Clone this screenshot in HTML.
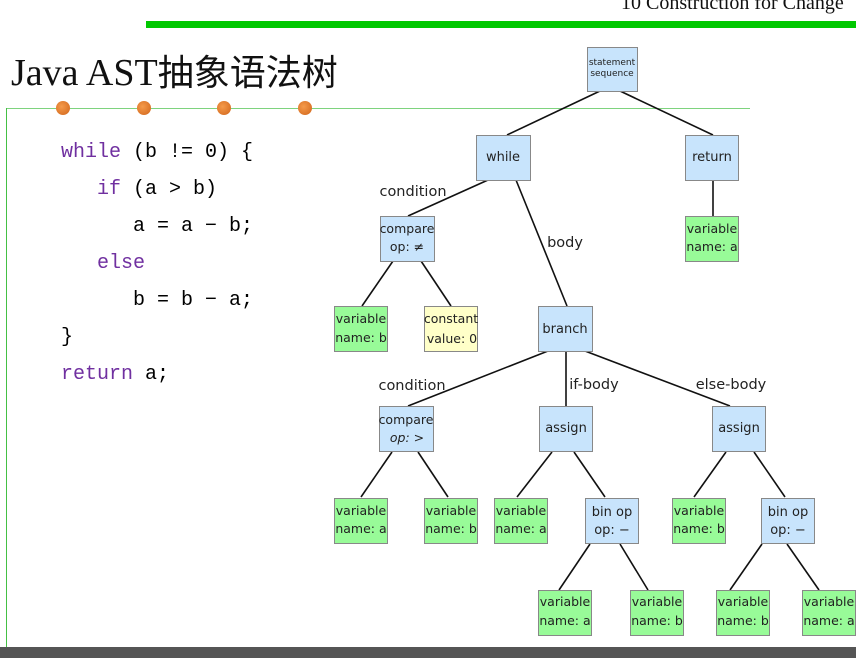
<!DOCTYPE html>
<html><head><meta charset="utf-8"><style>
html,body{margin:0;padding:0;background:#fff;width:856px;height:658px;overflow:hidden;position:relative}
.code{position:absolute;left:61px;top:134px;font-family:"Liberation Mono",monospace;font-size:20px;line-height:37px;color:#000;white-space:pre}
.k{color:#7030a0}
</style></head><body>
<div style="position:absolute;left:621px;top:-8px;font-family:'Liberation Serif',serif;font-size:20px;white-space:nowrap;color:#111">10 Construction for Change</div>
<div style="position:absolute;left:146px;top:21px;width:710px;height:7px;background:#00c800"></div>
<div style="position:absolute;left:11px;top:44px;font-family:'Liberation Serif','Noto Serif CJK SC',serif;font-size:38px;color:#111;white-space:nowrap">Java AST<span style="font-family:'Noto Sans CJK SC',sans-serif;font-size:36px">抽象语法树</span></div>
<div style="position:absolute;left:6px;top:108px;width:744px;height:1px;background:#7ed37e"></div>
<div style="position:absolute;left:6px;top:108px;width:1px;height:540px;background:#44c044"></div>
<div style="position:absolute;left:56px;top:101px;width:14px;height:14px;border-radius:50%;background:radial-gradient(circle at 40% 40%,#f59a4a,#d0651a)"></div>
<div style="position:absolute;left:137px;top:101px;width:14px;height:14px;border-radius:50%;background:radial-gradient(circle at 40% 40%,#f59a4a,#d0651a)"></div>
<div style="position:absolute;left:217px;top:101px;width:14px;height:14px;border-radius:50%;background:radial-gradient(circle at 40% 40%,#f59a4a,#d0651a)"></div>
<div style="position:absolute;left:298px;top:101px;width:14px;height:14px;border-radius:50%;background:radial-gradient(circle at 40% 40%,#f59a4a,#d0651a)"></div>
<div class="code"><span class="k">while</span> (b != 0) {
   <span class="k">if</span> (a &gt; b)
      a = a − b;
   <span class="k">else</span>
      b = b − a;
}
<span class="k">return</span> a;</div>
<div style="position:absolute;left:0;top:647px;width:856px;height:11px;background:#555"></div>
<svg width="856" height="658" style="position:absolute;left:0;top:0" font-family="DejaVu Sans,sans-serif" font-size="12.5" text-anchor="middle">
<g stroke="#111" stroke-width="1.6" fill="none">
<line x1="600" y1="91" x2="507" y2="135"/><line x1="620" y1="91" x2="713" y2="135"/>
<line x1="713" y1="180" x2="713" y2="216"/>
<line x1="488" y1="180" x2="408" y2="216"/><line x1="516" y1="180" x2="567" y2="306"/>
<line x1="393" y1="261" x2="362" y2="306"/><line x1="421" y1="261" x2="451" y2="306"/>
<line x1="548" y1="351" x2="408" y2="406"/><line x1="566" y1="351" x2="566" y2="406"/><line x1="585" y1="351" x2="730" y2="406"/>
<line x1="392" y1="452" x2="361" y2="497"/><line x1="418" y1="452" x2="448" y2="497"/>
<line x1="552" y1="452" x2="517" y2="497"/><line x1="574" y1="452" x2="605" y2="497"/>
<line x1="726" y1="452" x2="694" y2="497"/><line x1="754" y1="452" x2="785" y2="497"/>
<line x1="590" y1="544" x2="559" y2="590"/><line x1="620" y1="544" x2="648" y2="590"/>
<line x1="762" y1="544" x2="730" y2="590"/><line x1="787" y1="544" x2="819" y2="590"/>
</g>
<g stroke="#888" stroke-width="1">
<rect x="587.5" y="47.5" width="50" height="44" fill="#c8e4fc"/>
<rect x="476.5" y="135.5" width="54" height="45" fill="#c8e4fc"/>
<rect x="685.5" y="135.5" width="53" height="45" fill="#c8e4fc"/>
<rect x="380.5" y="216.5" width="54" height="45" fill="#c8e4fc"/>
<rect x="685.5" y="216.5" width="53" height="45" fill="#98fb98"/>
<rect x="334.5" y="306.5" width="53" height="45" fill="#98fb98"/>
<rect x="424.5" y="306.5" width="53" height="45" fill="#ffffc8"/>
<rect x="538.5" y="306.5" width="54" height="45" fill="#c8e4fc"/>
<rect x="379.5" y="406.5" width="54" height="45" fill="#c8e4fc"/>
<rect x="539.5" y="406.5" width="53" height="45" fill="#c8e4fc"/>
<rect x="712.5" y="406.5" width="53" height="45" fill="#c8e4fc"/>
<rect x="334.5" y="498.5" width="53" height="45" fill="#98fb98"/>
<rect x="424.5" y="498.5" width="53" height="45" fill="#98fb98"/>
<rect x="494.5" y="498.5" width="53" height="45" fill="#98fb98"/>
<rect x="585.5" y="498.5" width="53" height="45" fill="#c8e4fc"/>
<rect x="672.5" y="498.5" width="53" height="45" fill="#98fb98"/>
<rect x="761.5" y="498.5" width="53" height="45" fill="#c8e4fc"/>
<rect x="538.5" y="590.5" width="53" height="45" fill="#98fb98"/>
<rect x="630.5" y="590.5" width="53" height="45" fill="#98fb98"/>
<rect x="716.5" y="590.5" width="53" height="45" fill="#98fb98"/>
<rect x="802.5" y="590.5" width="53" height="45" fill="#98fb98"/>
</g>
<g fill="#222">
<text x="612" y="65" font-size="9">statement</text><text x="612" y="76" font-size="9">sequence</text>
<text x="503" y="161" font-size="13">while</text>
<text x="712" y="161" font-size="13">return</text>
<text x="407" y="233">compare</text><text x="407" y="251">op: ≠</text>
<text x="712" y="233">variable</text><text x="712" y="251">name: a</text>
<text x="361" y="323">variable</text><text x="361" y="342">name: b</text>
<text x="451" y="323">constant</text><text x="452" y="343">value: 0</text>
<text x="565" y="333" font-size="13">branch</text>
<text x="406" y="424">compare</text><text x="407" y="442" font-style="italic">op: &gt;</text>
<text x="566" y="432" font-size="13">assign</text>
<text x="739" y="432" font-size="13">assign</text>
<text x="361" y="515">variable</text><text x="361" y="533">name: a</text>
<text x="451" y="515">variable</text><text x="451" y="533">name: b</text>
<text x="521" y="515">variable</text><text x="521" y="533">name: a</text>
<text x="612" y="516" font-size="13">bin op</text><text x="612" y="534" font-size="13">op: −</text>
<text x="699" y="515">variable</text><text x="699" y="533">name: b</text>
<text x="788" y="516" font-size="13">bin op</text><text x="788" y="534" font-size="13">op: −</text>
<text x="565" y="606">variable</text><text x="565" y="625">name: a</text>
<text x="657" y="606">variable</text><text x="657" y="625">name: b</text>
<text x="743" y="606">variable</text><text x="743" y="625">name: b</text>
<text x="829" y="606">variable</text><text x="829" y="625">name: a</text>
</g>
<g fill="#222" font-size="14.5">
<text x="413" y="196">condition</text>
<text x="565" y="247">body</text>
<text x="412" y="390">condition</text>
<text x="594" y="389">if-body</text>
<text x="731" y="389">else-body</text>
</g>
</svg>
</body></html>
